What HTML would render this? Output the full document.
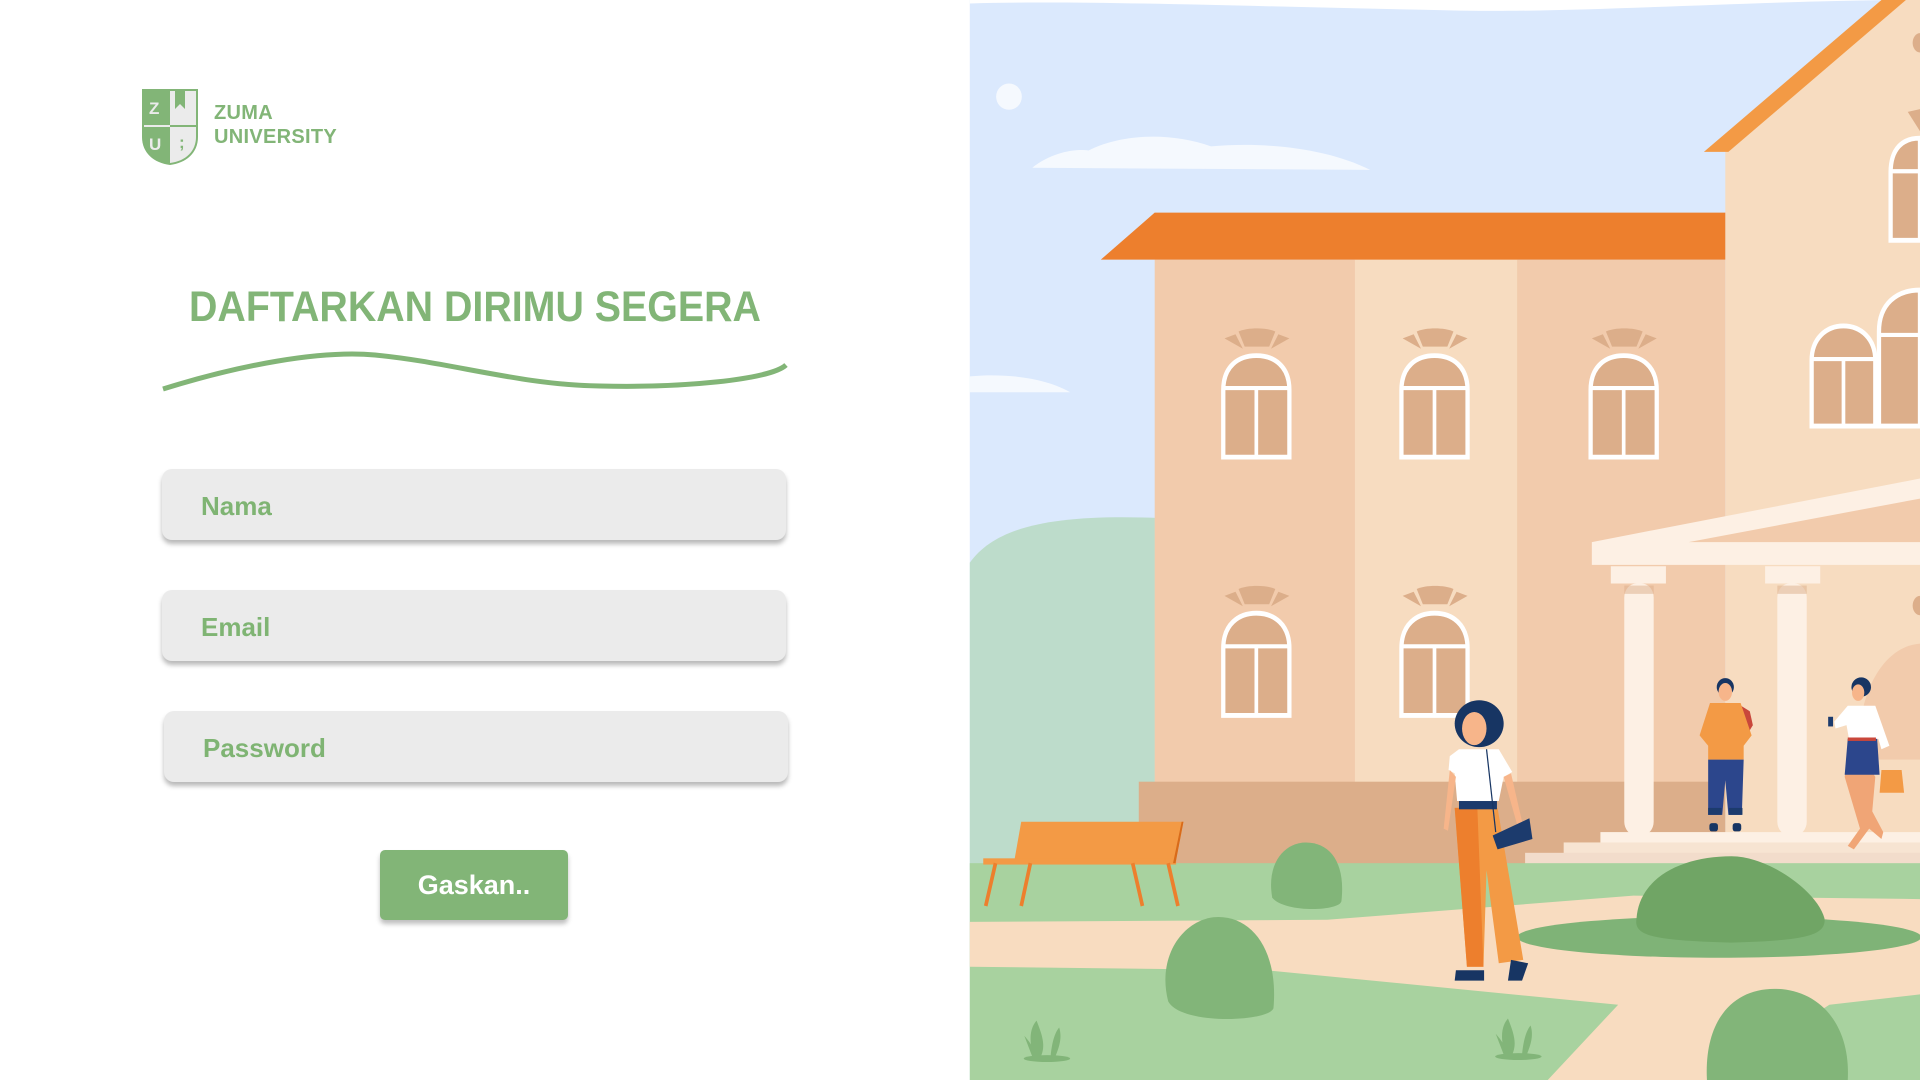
<!DOCTYPE html>
<html><head><meta charset="utf-8"><style>
html,body{margin:0;padding:0;width:1920px;height:1080px;overflow:hidden;background:#fff;font-family:"Liberation Sans",Arial,sans-serif}
.abs{position:absolute}
.logo-t{left:214px;top:101px;color:#82b577;font-weight:bold;font-size:20px;line-height:24px;letter-spacing:.3px}
h1{position:absolute;left:150px;width:650px;top:283px;margin:0;text-align:center;color:#82b577;font-size:43px;font-weight:bold;transform:scaleX(.915);transform-origin:center}
.inp{position:absolute;background:#ebebeb;border-radius:10px;box-shadow:0 4px 5px rgba(0,0,0,.28);height:71px;width:624px}
.inp span{position:absolute;left:39px;top:22px;color:#7fb473;font-weight:bold;font-size:26px}
.btn{position:absolute;left:380px;top:850px;width:188px;height:70px;background:#82b577;border-radius:5px;box-shadow:0 4px 5px rgba(0,0,0,.25);color:#fff;font-weight:bold;font-size:27px;text-align:center;line-height:70px}
</style></head><body>
<svg class="abs" style="left:142px;top:89px" width="56" height="76" viewBox="0 0 56 76">
<path d="M0 0H56V48C56 64 44 74 28 76C12 74 0 64 0 48Z" fill="#82b577"/>
<path d="M28 2H54V48C54 62 44 72 28 74Z" fill="#ebebeb"/>
<rect x="2" y="36" width="52" height="2" fill="#ebebeb"/>
<rect x="28" y="36" width="26" height="2" fill="#82b577"/>
<path d="M33 2V20L38 15L43 20V2" fill="#82b577"/>
<text x="7" y="25" fill="#ebebeb" font-size="17" font-weight="bold" font-family="Liberation Sans">Z</text>
<text x="7" y="61" fill="#ebebeb" font-size="17" font-weight="bold" font-family="Liberation Sans">U</text>
<text x="37" y="59" fill="#82b577" font-size="17" font-weight="bold" font-family="Liberation Sans">;</text>
</svg>
<div class="abs logo-t">ZUMA<br>UNIVERSITY</div>
<h1>DAFTARKAN DIRIMU SEGERA</h1>
<svg class="abs" style="left:0;top:0" width="960" height="500"><path d="M163 389C240 365 320 350 375 355C450 362 520 385 600 386C680 388 770 380 786 365" fill="none" stroke="#82b577" stroke-width="5"/></svg>
<div class="inp" style="left:162px;top:469px"><span>Nama</span></div>
<div class="inp" style="left:162px;top:590px"><span>Email</span></div>
<div class="inp" style="left:164px;top:711px"><span>Password</span></div>
<div class="btn">Gaskan..</div>

<svg class="abs" style="left:960px;top:0" width="960" height="1080" viewBox="0 0 1568 1564" preserveAspectRatio="none">
<rect x="16" y="0" width="1552" height="1564" fill="#dbe9fd"/>
<path d="M16 0H1568V0C1300 0 1000 20 800 15C500 10 200 0 16 5Z" fill="#fff"/>
<ellipse cx="80" cy="140" rx="21" ry="19" fill="#f5f9fe"/>
<path d="M118 243C150 220 190 215 210 218C260 195 340 190 410 212C500 205 600 215 670 246Z" fill="#f5f9fe"/>
<path d="M16 545C80 540 140 548 180 568H16Z" fill="#f5f9fe"/>
<path d="M16 815C60 760 160 745 320 750V1260H16Z" fill="#bddccb"/>
<path d="M1250 220L1530 0H1568V1250H1250Z" fill="#f7dcc0"/>
<path d="M1215 220L1505 0H1545L1255 220Z" fill="#f39a45"/>
<path d="M1470 1050C1480 980 1520 935 1568 932V1100H1470Z" fill="#f2cbac"/>
<rect x="318" y="376" width="932" height="760" fill="#f2cbac"/>
<rect x="645" y="376" width="265" height="760" fill="#f7dcc0"/>
<path d="M230 376L318 308H1250V376Z" fill="#ed7f2d"/>
<rect x="292" y="1132" width="958" height="120" fill="#dcae8a"/>
<g fill="#dcae8a" stroke="#fff" stroke-width="7">
<path d="M430 662V565C430 530 455 515 484 515C513 515 538 530 538 565V662Z"/>
<path d="M721 662V565C721 530 746 515 775 515C804 515 829 530 829 565V662Z"/>
<path d="M1030 662V565C1030 530 1055 515 1084 515C1113 515 1138 530 1138 565V662Z"/>
<path d="M430 1036V939C430 904 455 888 484 888C513 888 538 904 538 939V1036Z"/>
<path d="M721 1036V939C721 904 746 888 775 888C804 888 829 904 829 939V1036Z"/>
<path d="M1391 617V522C1391 490 1415 472 1443 472C1471 472 1495 490 1495 522V617Z"/>
<path d="M1501 617V480C1501 440 1530 420 1568 420V617Z"/>
<path d="M1520 348V250C1520 215 1540 200 1568 200V348Z"/>
</g>
<g stroke="#fff" stroke-width="6">
<path d="M430 562H538M484 562V662M721 562H829M775 562V662M1030 562H1138M1084 562V662M430 936H538M484 936V1036M721 936H829M775 936V1036M1391 520H1495M1443 520V617M1501 485H1568M1520 248H1568"/>
</g>
<g fill="#dcae8a">
<path d="M455 480C470 474 500 474 515 480L505 502H465Z"/><path d="M432 490L450 484L462 505Z"/><path d="M538 490L520 484L508 505Z"/>
<path d="M746 480C761 474 791 474 806 480L796 502H756Z"/><path d="M723 490L741 484L753 505Z"/><path d="M829 490L811 484L799 505Z"/>
<path d="M1055 480C1070 474 1100 474 1115 480L1105 502H1065Z"/><path d="M1032 490L1050 484L1062 505Z"/><path d="M1138 490L1120 484L1108 505Z"/>
<path d="M455 853C470 847 500 847 515 853L505 875H465Z"/><path d="M432 863L450 857L462 878Z"/><path d="M538 863L520 857L508 878Z"/>
<path d="M746 853C761 847 791 847 806 853L796 875H756Z"/><path d="M723 863L741 857L753 878Z"/><path d="M829 863L811 857L799 878Z"/>
<path d="M1548 162L1568 158V190Z"/>
<ellipse cx="1568" cy="62" rx="12" ry="14"/><ellipse cx="1568" cy="877" rx="12" ry="14"/>
</g>
<path d="M1032 785L1568 693V818H1032Z" fill="#fdf0e4"/>
<path d="M1190 785L1568 722V785Z" fill="#f2cbac"/>
<g fill="#fdf0e4">
<rect x="1063" y="820" width="90" height="25"/><rect x="1085" y="845" width="48" height="365" rx="20"/>
<rect x="1315" y="820" width="90" height="25"/><rect x="1335" y="845" width="48" height="365" rx="20"/>
<rect x="1046" y="1205" width="522" height="16"/>
</g>
<rect x="1085" y="848" width="48" height="12" fill="#dcae8a" opacity=".5"/><rect x="1335" y="848" width="48" height="12" fill="#dcae8a" opacity=".5"/>
<rect x="986" y="1220" width="582" height="16" fill="#f7e4d2"/>
<rect x="923" y="1235" width="645" height="17" fill="#f2dccb"/>
<rect x="16" y="1250" width="1552" height="314" fill="#a8d29f"/>
<path d="M16 1335L600 1332L1100 1297L1568 1302V1440L1420 1455L1230 1564H960L1075 1455L500 1405L16 1400Z" fill="#f8dcc0"/>
<ellipse cx="1240" cy="1357" rx="330" ry="30" fill="#7fb377"/>
<path d="M1105 1330C1110 1270 1180 1240 1260 1240C1320 1240 1400 1290 1412 1330C1415 1355 1380 1362 1260 1365C1130 1362 1100 1355 1105 1330Z" fill="#70a565"/>
<path d="M510 1300C500 1250 530 1220 565 1220C605 1220 630 1250 623 1305C620 1320 530 1322 510 1300Z" fill="#82b579"/>
<path d="M340 1450C320 1380 370 1328 422 1328C480 1328 520 1380 512 1460C505 1480 360 1485 340 1450Z" fill="#82b579"/>
<path d="M1220 1564C1215 1480 1260 1432 1330 1432C1400 1432 1455 1480 1450 1564Z" fill="#82b579"/>
<g fill="#82b579"><ellipse cx="142" cy="1533" rx="38" ry="5"/><path d="M120 1528C110 1500 118 1485 125 1478C135 1500 140 1515 132 1530ZM148 1530C150 1510 155 1495 162 1488C168 1505 160 1520 155 1532ZM105 1500C115 1510 122 1520 125 1530L118 1530Z"/>
<ellipse cx="912" cy="1530" rx="38" ry="5"/><path d="M890 1525C880 1497 888 1482 895 1475C905 1497 910 1512 902 1527ZM918 1527C920 1507 925 1492 932 1485C938 1502 930 1517 925 1529ZM875 1497C885 1507 892 1517 895 1527L888 1527Z"/></g>
<g fill="#f39a45"><path d="M100 1190H365L352 1250H88Z"/><rect x="38" y="1243" width="315" height="9"/></g>
<g stroke="#ed7f2d" stroke-width="6"><path d="M58 1250L42 1312M115 1250L100 1312M282 1250L298 1312M340 1250L356 1312"/></g>
<path d="M352 1250L365 1190L362 1190L348 1250Z" fill="#d86b1a"/>
<path d="M808 1170H878L920 1390L880 1395L860 1260L855 1400H828Z" fill="#f39a45"/>
<path d="M808 1170H845L855 1400H828Z" fill="#ed7f2d"/>
<path d="M810 1405H856V1420H808Z" fill="#173563"/><path d="M900 1390L928 1395L918 1420H895Z" fill="#173563"/>
<path d="M800 1095L815 1085H880L902 1118L888 1125L880 1160H812L808 1120L798 1115Z" fill="#fff"/>
<rect x="815" y="1160" width="62" height="12" fill="#1c3b6d"/>
<path d="M800 1115L790 1200L797 1203L810 1125ZM888 1125L915 1210L922 1205L900 1120Z" fill="#f7b58a"/>
<ellipse cx="848" cy="1048" rx="40" ry="34" fill="#173563"/>
<ellipse cx="840" cy="1055" rx="20" ry="24" fill="#f7b58a"/>
<path d="M870 1210L930 1185L935 1215L878 1230Z" fill="#1c3b6d"/>
<path d="M860 1085L875 1205" stroke="#173563" stroke-width="2" fill="none"/>
<ellipse cx="1250" cy="995" rx="14" ry="13" fill="#173563"/><ellipse cx="1250" cy="1002" rx="11" ry="13" fill="#f7b58a"/>
<path d="M1272 1020L1290 1030L1295 1050L1285 1065Z" fill="#c9473b"/>
<path d="M1225 1018H1275L1293 1065L1280 1080L1280 1100H1222V1080L1208 1065Z" fill="#f39a45"/>
<path d="M1222 1100H1280L1277 1180H1255L1250 1130L1245 1180H1222Z" fill="#2c468c"/>
<rect x="1222" y="1170" width="22" height="10" fill="#1c3b6d"/><rect x="1256" y="1170" width="22" height="10" fill="#1c3b6d"/>
<rect x="1224" y="1192" width="14" height="12" rx="4" fill="#173563"/><rect x="1262" y="1192" width="14" height="12" rx="4" fill="#173563"/>
<ellipse cx="1472" cy="995" rx="16" ry="14" fill="#173563"/><ellipse cx="1467" cy="1003" rx="10" ry="12" fill="#f7b58a"/>
<path d="M1455 1070L1445 1125L1470 1200L1450 1225L1460 1230L1485 1200L1505 1215L1508 1205L1490 1175L1495 1125Z" fill="#f0a576"/>
<path d="M1450 1022H1495L1518 1080L1505 1085L1500 1070H1452L1448 1050L1430 1055L1428 1045Z" fill="#fff"/>
<path d="M1450 1070H1498L1502 1122H1445Z" fill="#2c468c"/>
<rect x="1450" y="1068" width="46" height="5" fill="#c9473b"/>
<path d="M1505 1115H1538L1542 1148H1502Z" fill="#f39a45"/>
<rect x="1418" y="1038" width="8" height="14" fill="#1c3b6d"/>
</svg>
</body></html>
